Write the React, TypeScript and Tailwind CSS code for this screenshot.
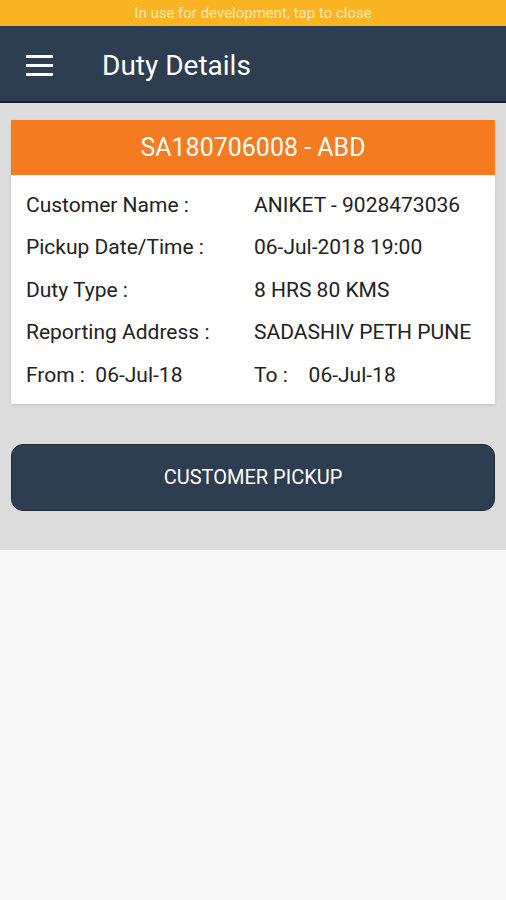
const rows: [string, string][] = [
  ["Customer Name :", "ANIKET - 9028473036"],
  ["Pickup Date/Time :", "06-Jul-2018 19:00"],
  ["Duty Type :", "8 HRS 80 KMS"],
  ["Reporting Address :", "SADASHIV PETH PUNE"],
];

export default function App() {
  return (
    <div className="min-h-[900px] w-[506px] bg-[#f8f8f8] font-['Roboto',sans-serif]">
      <div className="h-[26px] bg-[#fbb421] flex items-center justify-center text-[15px] text-[#fde7b8]">
        In use for development, tap to close
      </div>

      <div className="h-[77px] bg-[#2c3e50] border-b-[2px] border-[#14223d] flex items-center pt-[4px]">
        <div className="w-[102px] pl-[26px] flex flex-col gap-[6px]">
          <div className="w-[27px] h-[3px] bg-white" />
          <div className="w-[27px] h-[3px] bg-white" />
          <div className="w-[27px] h-[3px] bg-white" />
        </div>
        <h1 className="text-[28px] text-white leading-none">Duty Details</h1>
      </div>

      <div className="bg-[#dcdcdc] px-[11px] pt-[17px] pb-[39px]">
        <div className="bg-white shadow-sm">
          <div className="h-[55px] bg-[#f47b20] flex items-center justify-center text-[25px] text-white">
            SA180706008 - ABD
          </div>
          <div className="pt-[9px] pb-[7px] px-[15px] text-[21px] text-[#222]">
            {rows.map(([label, value]) => (
              <div key={label} className="h-[42.5px] grid grid-cols-[228px_1fr] items-center">
                <span>{label}</span>
                <span>{value}</span>
              </div>
            ))}
            <div className="h-[42.5px] grid grid-cols-[228px_1fr] items-center">
              <span>From :&nbsp;&nbsp;06-Jul-18</span>
              <span>To :&nbsp;&nbsp;&nbsp;&nbsp;06-Jul-18</span>
            </div>
          </div>
        </div>

        <button className="mt-[40px] w-full h-[67px] rounded-[12px] bg-[#2c3e50] border border-[#1b2a40] text-white text-[20px] flex items-center justify-center">
          CUSTOMER PICKUP
        </button>
      </div>
    </div>
  );
}
